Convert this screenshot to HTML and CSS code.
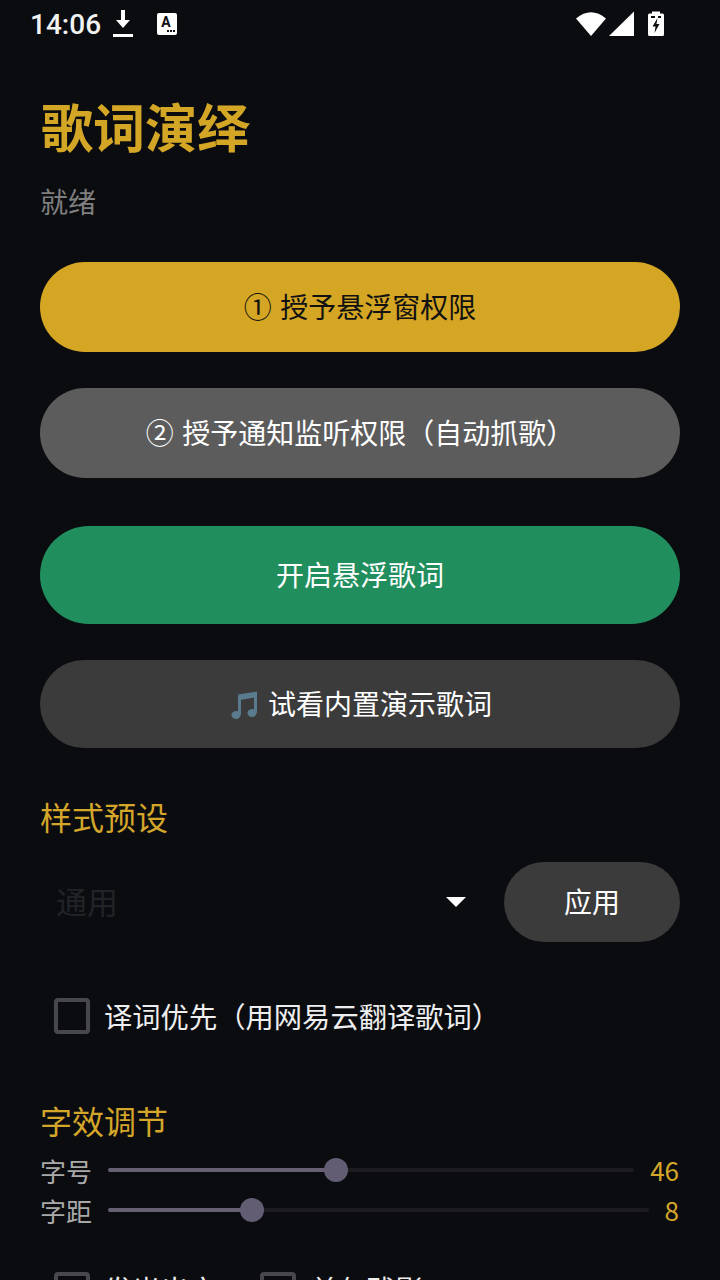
FILE: index.html
```html
<!DOCTYPE html>
<html lang="zh-CN">
<head>
<meta charset="utf-8">
<title>歌词演绎</title>
<link rel="stylesheet" href="styles.css">
</head>
<body>
<div class="screen">
  <header class="statusbar">
    <div class="status-left">
      <span class="clock">14:06</span>
      <svg class="ic-download" width="22" height="28" viewBox="0 0 22 28"><path d="M9 0h4v10h5l-7 8-7-8h5z" fill="#fff"/><rect x="1" y="24" width="20" height="3" fill="#fff"/></svg>
      <svg class="ic-a" width="20" height="22" viewBox="0 0 20 22"><rect width="20" height="22" rx="2" fill="#fff"/><text x="9" y="14" class="ic-a-letter">A</text><rect x="10" y="17" width="2" height="2" fill="#0b0c10"/><rect x="13" y="17" width="2" height="2" fill="#0b0c10"/><rect x="16" y="17" width="2" height="2" fill="#0b0c10"/></svg>
    </div>
    <div class="status-right">
      <svg width="30" height="26" viewBox="0 0 30 26"><path d="M0 7.500Q15-5 30 7.500L15 25z" fill="#fff"/></svg>
      <svg width="25" height="26" viewBox="0 0 25 26"><path d="M25 0.500V25H0z" fill="#fff"/></svg>
      <svg class="ic-batt" width="16" height="26" viewBox="0 0 16 26"><path d="M4 0.500h8v2h2.500a1.500 1.500 0 0 1 1.500 1.500v19.500a1.500 1.500 0 0 1-1.500 1.500h-13a1.500 1.500 0 0 1-1.500-1.500v-19.500a1.500 1.500 0 0 1 1.500-1.500h2.500z" fill="#fff"/><rect x="3" y="5" width="4" height="2" fill="#0b0c10"/><rect x="10" y="5" width="3" height="2" fill="#0b0c10"/><path d="M9.500 7L4.500 15.500h3l-1 6.500 5-9h-3z" fill="#0b0c10"/></svg>
    </div>
  </header>

  <main class="content">
    <h1 class="title">歌词演绎</h1>
    <p class="status-text">就绪</p>

    <button class="btn btn-gold">① 授予悬浮窗权限</button>
    <button class="btn btn-gray">② 授予通知监听权限（自动抓歌）</button>
    <button class="btn btn-green">开启悬浮歌词</button>
    <button class="btn btn-dark"><svg class="ic-note" width="30" height="30" viewBox="0 0 30 30"><path d="M10 3.500L29 0.500V6L12 9z" fill="#5a7b8e"/><path d="M11.500 5V24M27.500 2V22" fill="none" stroke="#5a7b8e" stroke-width="3"/><ellipse cx="8" cy="24" rx="4.500" ry="4" fill="#5a7b8e"/><ellipse cx="24" cy="22" rx="4.500" ry="4" fill="#5a7b8e"/></svg>试看内置演示歌词</button>

    <h2 class="section section-preset">样式预设</h2>
    <div class="preset-row">
      <div class="spinner">
        <span class="spinner-value">通用</span>
        <span class="spinner-arrow"></span>
      </div>
      <button class="btn-apply">应用</button>
    </div>

    <label class="check check-translate"><span class="box"></span><span class="check-text">译词优先（用网易云翻译歌词）</span></label>

    <h2 class="section section-effect">字效调节</h2>
    <div class="slider-row slider-size">
      <span class="slider-label">字号</span>
      <div class="track"><div class="fill" style="width:228px"></div><div class="thumb"></div></div>
      <span class="slider-value">46</span>
    </div>
    <div class="slider-row slider-space">
      <span class="slider-label">字距</span>
      <div class="track"><div class="fill" style="width:144px"></div><div class="thumb"></div></div>
      <span class="slider-value">8</span>
    </div>

    <div class="check-row">
      <label class="check"><span class="box"></span><span class="check-text">发光出字</span></label>
      <label class="check"><span class="box"></span><span class="check-text">首句残影</span></label>
    </div>
  </main>
</div>
</body>
</html>
```
FILE: styles.css
```css
* { box-sizing: border-box; }
html, body { margin: 0; padding: 0; background: #0b0c10; }
body { font-family: "Noto Sans CJK SC", "Noto Sans", sans-serif; color: #fff; }
.screen { width: 720px; height: 1280px; overflow: hidden; background: #0b0c10; }

.statusbar { height: 48px; padding: 0 56px 0 30px; display: flex; justify-content: space-between; align-items: center; }
.status-left { display: flex; align-items: center; }
.clock { font-family: Roboto, sans-serif; font-weight: 500; font-size: 28px; line-height: 48px; padding-top: 1px; color: #f2f2f2; }
.ic-download { margin-left: 11px; }
.ic-a { margin-left: 23px; }
.ic-a-letter { font-family: Roboto, sans-serif; font-weight: 700; font-size: 14px; text-anchor: middle; fill: #0b0c10; }
.status-right { display: flex; align-items: center; gap: 3px; }
.ic-batt { margin-left: 11px; }

.content { padding: 0 40px; }
.title { margin: 44px 0 0 1px; height: 68px; font-size: 52px; line-height: 68px; font-weight: 700; color: #d4a626; }
.status-text { margin: 21px 0 0; height: 40px; font-size: 28px; line-height: 40px; color: #7f7f7f; }

.btn { display: flex; align-items: center; justify-content: center; width: 640px; border: 0; border-radius: 45px; font: inherit; font-size: 28px; word-spacing: 2px; color: #fff; padding: 0 0 2px; }
.btn-gold { height: 90px; margin-top: 41px; background: #d4a623; color: #111; }
.btn-gray { height: 90px; margin-top: 36px; background: #5c5c5c; }
.btn-green { height: 98px; margin-top: 48px; border-radius: 49px; background: #218e5e; }
.btn-dark { height: 88px; margin-top: 36px; border-radius: 44px; background: #3b3b3b; }
.ic-note { margin: 6px 10px 0 0; }

.section { margin: 0; font-size: 32px; line-height: 44px; font-weight: 400; color: #d4a62a; }
.section-preset { margin-top: 46px; }
.preset-row { display: flex; align-items: center; justify-content: space-between; margin-top: 24px; height: 80px; }
.spinner { width: 442px; padding-left: 16px; padding-right: 16px; display: flex; align-items: center; justify-content: space-between; }
.spinner-value { font-size: 31px; line-height: 44px; padding-bottom: 2px; color: #222326; }
.spinner-arrow { width: 0; height: 0; border-left: 10px solid transparent; border-right: 10px solid transparent; border-top: 10px solid #fff; }
.btn-apply { width: 176px; height: 80px; border: 0; border-radius: 40px; background: #3b3b3b; color: #fff; font: inherit; font-size: 28px; padding: 0 0 2px; }

.check { display: inline-flex; align-items: center; font-size: 28.3px; color: #eeeeee; padding-left: 14px; }
.check-text { padding-bottom: 2px; }
.box { width: 36px; height: 36px; border: 4px solid #49474e; border-radius: 4px; margin-right: 14px; flex: none; }
.check-translate { display: flex; margin-top: 52px; height: 44px; }

.section-effect { margin-top: 60px; }
.slider-row { display: flex; align-items: center; height: 38px; }
.slider-size { margin-top: 9px; }
.slider-space { margin-top: 2px; }
.slider-label { width: 68px; font-size: 26px; line-height: 38px; padding-top: 2px; color: #a9a9a9; flex: none; }
.track { position: relative; height: 4px; flex: 1; background: #1c1c20; border-radius: 2px; }
.fill { height: 4px; background: #675f74; border-radius: 2px; }
.thumb { position: absolute; top: -10px; width: 24px; height: 24px; border-radius: 50%; background: #635d73; }
.slider-size .thumb { left: 216px; }
.slider-space .thumb { left: 132px; }
.slider-value { font-size: 26px; line-height: 38px; padding-bottom: 1px; padding-right: 1px; color: #d4a62a; text-align: right; flex: none; }
.slider-size .slider-value { width: 46px; }
.slider-space .slider-value { width: 31px; }

.check-row { display: flex; margin-top: 39px; }
.check-row .check:last-child { margin-left: 29px; }
```
